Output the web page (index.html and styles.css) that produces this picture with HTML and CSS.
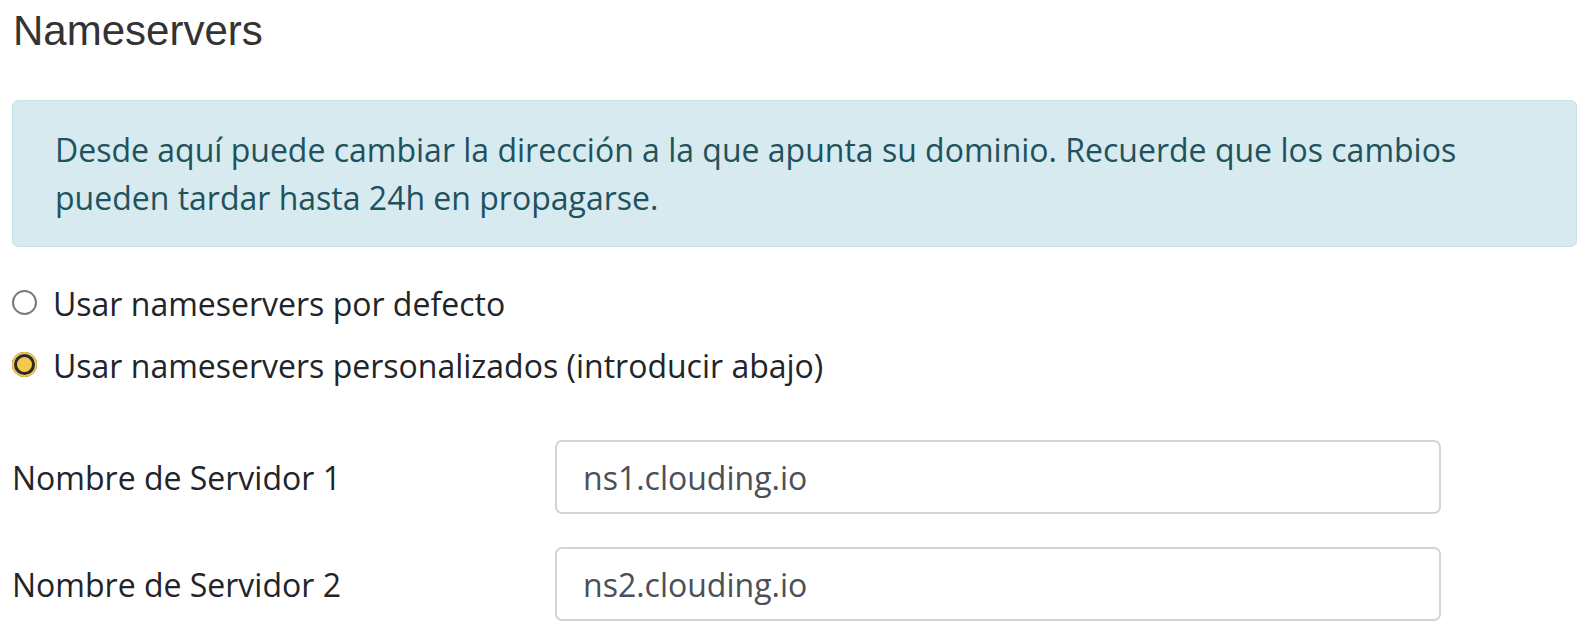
FILE: index.html
```html
<!DOCTYPE html>
<html lang="es">
<head>
<meta charset="utf-8">
<title>Nameservers</title>
<link rel="stylesheet" href="styles.css">
</head>
<body>
<div class="page">
  <h2 class="title">Nameservers</h2>
  <div class="alert">Desde aquí puede cambiar la dirección a la que apunta su dominio. Recuerde que los cambios pueden tardar hasta 24h en propagarse.</div>
  <div class="radios">
    <label class="radio-row"><input type="radio" name="ns" class="radio"><span>Usar nameservers por defecto</span></label>
    <label class="radio-row"><input type="radio" name="ns" class="radio" checked><span>Usar nameservers personalizados (introducir abajo)</span></label>
  </div>
  <div class="form">
    <div class="form-row">
      <label class="form-label" for="ns1">Nombre de Servidor 1</label>
      <input class="form-input" id="ns1" type="text" value="ns1.clouding.io">
    </div>
    <div class="form-row">
      <label class="form-label" for="ns2">Nombre de Servidor 2</label>
      <input class="form-input" id="ns2" type="text" value="ns2.clouding.io">
    </div>
  </div>
</div>
</body>
</html>
```

FILE: styles.css
```css
html, body {
  margin: 0;
  padding: 0;
  background: #ffffff;
}

.page {
  padding: 0 13px 0 12px;
  font-family: "Open Sans", "Noto Sans", sans-serif;
  font-size: 32px;
  line-height: 47px;
  color: #212529;
}

.title {
  margin: 5px 0 43px 1px;
  font-family: "Liberation Sans", Arial, sans-serif;
  font-weight: 400;
  font-size: 42px;
  line-height: 52px;
  color: #333333;
}

.alert {
  box-sizing: border-box;
  height: 147px;
  padding: 25px 42px;
  background: #d6eaf0;
  border: 1px solid #c6e3ea;
  border-radius: 6px;
  color: #1f525d;
  font-size: 32px;
  line-height: 48px;
}

.radios {
  margin-top: 25px;
  display: flex;
  flex-direction: column;
}

.radio-row {
  display: flex;
  align-items: center;
  gap: 16px;
  height: 62px;
}

.radio {
  appearance: none;
  -webkit-appearance: none;
  margin: 0;
  flex: none;
  width: 25px;
  height: 25px;
  border-radius: 50%;
  box-sizing: border-box;
  border: 2px solid #7a7a7a;
  background: #ffffff;
  position: relative;
  top: -1px;
}

.radio:checked {
  border: none;
  background: #f5c84e;
  box-shadow: inset 0 0 0 2px #f5c84e, inset 0 0 0 5px #2b2b2b;
}

.form {
  margin-top: 44px;
  display: flex;
  flex-direction: column;
  gap: 33px;
}

.form-row {
  display: flex;
  align-items: baseline;
}

.form-label {
  width: 543px;
  flex: none;
}

.form-input {
  box-sizing: border-box;
  width: 886px;
  height: 74px;
  padding: 0 26px;
  border: 2px solid #d1d5da;
  border-radius: 7px;
  font-family: "Open Sans", "Noto Sans", sans-serif;
  font-size: 32px;
  color: #495057;
  background: #ffffff;
  outline: none;
}
```
